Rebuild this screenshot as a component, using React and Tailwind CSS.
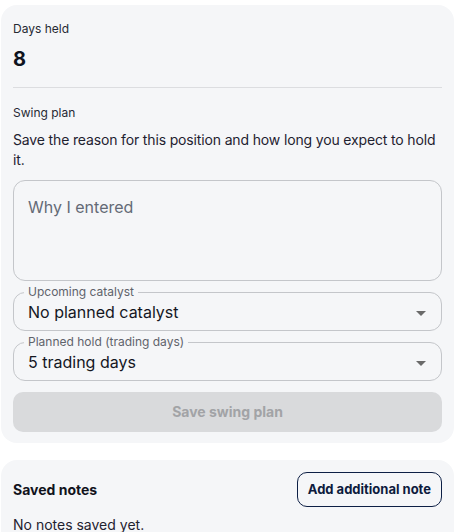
export default function App() {
  const font = { fontFamily: 'Inter, "Noto Sans", sans-serif' };
  return (
    <div className="min-h-[532px] bg-white text-[#1a1c26]" style={font}>
      <div className="pt-[5px] pl-[1px]">
        <div className="w-[453px] rounded-2xl bg-[#f5f6f8] px-3 pt-4 pb-[11px]">
          <div className="text-xs leading-4 text-[#262933]">Days held</div>
          <div className="mt-2 text-xl font-bold leading-7 text-[#0f1320]">8</div>
          <div className="mt-[14px] border-t border-[#dcdde0]" />
          <div className="mt-[17px] text-xs leading-4 text-[#262933]">Swing plan</div>
          <p className="mt-[9px] text-sm leading-5 tracking-[-0.15px] text-[#1f2230]">
            Save the reason for this position and how long you expect to hold it.
          </p>
          <div className="mt-[10px] h-[101px] rounded-xl border border-[#c4c6ca] px-[14px] pt-[14px]">
            <div className="text-base leading-6 text-[#646a76]">Why I entered</div>
          </div>
          <fieldset className="mt-[3px] rounded-xl border border-[#c4c6ca] px-[10px]">
            <legend className="px-1 text-xs leading-4 text-[#5f636b]">Upcoming catalyst</legend>
            <div className="flex items-center justify-between pl-1 pr-[5px] pb-[6px]">
              <span className="text-base leading-6 text-[#14161f]">No planned catalyst</span>
              <svg width="10" height="5" viewBox="0 0 10 5" className="mt-[3px]">
                <path d="M0 0 L10 0 L5 5 Z" fill="#6a6a6a" />
              </svg>
            </div>
          </fieldset>
          <fieldset className="mt-[3px] rounded-xl border border-[#c4c6ca] px-[10px]">
            <legend className="px-1 text-xs leading-4 text-[#5f636b]">Planned hold (trading days)</legend>
            <div className="flex items-center justify-between pl-1 pr-[5px] pb-[6px]">
              <span className="text-base leading-6 text-[#14161f]">5 trading days</span>
              <svg width="10" height="5" viewBox="0 0 10 5" className="mt-[3px]">
                <path d="M0 0 L10 0 L5 5 Z" fill="#6a6a6a" />
              </svg>
            </div>
          </fieldset>
          <button className="mt-[11px] flex h-10 w-full items-center justify-center rounded-[10px] bg-[#d9dadc] text-sm font-bold text-[#a2a3a6]">
            Save swing plan
          </button>
        </div>
        <div className="mt-[17px] w-[453px] rounded-t-2xl bg-[#f5f6f8] px-3 pt-3 pb-4">
          <div className="flex items-center justify-between">
            <span className="text-sm font-bold text-[#11131c]">Saved notes</span>
            <button className="flex h-[35px] items-center rounded-[10px] border border-[#0d1f45] px-[10px] text-[13px] font-bold text-[#0d1b3d]">
              Add additional note
            </button>
          </div>
          <div className="mt-2 text-sm leading-5 text-[#1f2230]">No notes saved yet.</div>
        </div>
      </div>
    </div>
  );
}
